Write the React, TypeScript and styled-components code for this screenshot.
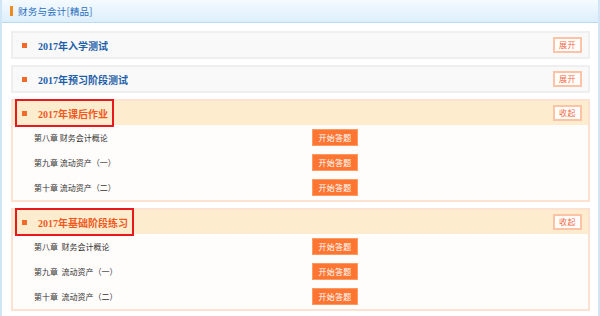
import React from "react";
import styled, { createGlobalStyle } from "styled-components";

const GlobalStyle = createGlobalStyle`
  html, body {
    margin: 0;
    padding: 0;
    background: #fff;
  }
  * {
    box-sizing: border-box;
  }
`;

const Frame = styled.div`
  width: 600px;
  height: 316px;
  border-left: 2px solid #cfe6f7;
  border-right: 2px solid #cfe6f7;
  overflow: hidden;
  font-family: "Liberation Serif", "Noto Sans CJK SC", serif;
`;

const TopBar = styled.div`
  height: 23px;
  display: flex;
  align-items: center;
  padding-left: 8px;
  gap: 5px;
  background: linear-gradient(180deg, #f4faff 0%, #ddeffc 100%);
  border-bottom: 1px solid #b9dcf4;
`;

const Marker = styled.span`
  width: 3px;
  height: 10px;
  background: #f08a1c;
`;

const Heading = styled.span`
  font-family: "Noto Sans CJK SC", sans-serif;
  font-size: 9.5px;
  color: #2a6fbf;
  letter-spacing: 0.2px;
`;

const List = styled.div`
  display: flex;
  flex-direction: column;
  gap: 6px;
  padding: 8px 8px 0 9px;
`;

const Card = styled.div<{ $open?: boolean }>`
  border: 2px solid ${(p) => (p.$open ? "#fde2d2" : "#efefef")};
  background: ${(p) => (p.$open ? "#fffdfc" : "#f9f9f9")};
`;

const CardHead = styled.div<{ $open?: boolean }>`
  height: 24px;
  display: flex;
  align-items: center;
  justify-content: space-between;
  padding-right: 6px;
  background: ${(p) => (p.$open ? "#feecce" : "transparent")};
`;

const TitleBox = styled.div<{ $mark?: boolean }>`
  display: flex;
  align-items: center;
  gap: 11px;
  height: ${(p) => (p.$mark ? "28px" : "24px")};
  margin-left: ${(p) => (p.$mark ? "2px" : "0")};
  padding-left: ${(p) => (p.$mark ? "5px" : "9px")};
  padding-right: 4px;
  border: ${(p) => (p.$mark ? "2px solid #e8191c" : "none")};
`;

const Bullet = styled.span`
  width: 5px;
  height: 5px;
  background: #f26a2a;
`;

const Title = styled.span<{ $open?: boolean }>`
  font-family: "Liberation Serif", "Noto Sans CJK SC", serif;
  font-weight: bold;
  font-size: 10px;
  color: ${(p) => (p.$open ? "#f05a1e" : "#1f5faa")};
`;

const Toggle = styled.button`
  width: 29px;
  height: 16px;
  padding: 0;
  border: 2px solid #fcc3a6;
  background: #fffdfb;
  color: #f26a44;
  font-family: "Noto Sans CJK SC", sans-serif;
  font-size: 8px;
  line-height: 12px;
  letter-spacing: 0.5px;
`;

const Row = styled.div`
  height: 25px;
  display: flex;
  align-items: center;
  padding-left: 21px;
`;

const Label = styled.span`
  width: 278px;
  font-family: "Noto Sans CJK SC", sans-serif;
  font-size: 8px;
  color: #333;
  white-space: pre;
`;

const StartButton = styled.button`
  width: 46px;
  height: 17px;
  padding: 0;
  border: 1px solid #ff9a63;
  background: #ff7632;
  color: #fff;
  font-family: "Noto Sans CJK SC", sans-serif;
  font-size: 8px;
  line-height: 15px;
  letter-spacing: 0.3px;
`;

type Section = {
  title: string;
  open?: boolean;
  mark?: boolean;
  rows?: string[];
};

const sections: Section[] = [
  { title: "2017年入学测试" },
  { title: "2017年预习阶段测试" },
  {
    title: "2017年课后作业",
    open: true,
    mark: true,
    rows: ["第八章 财务会计概论", "第九章 流动资产（一）", "第十章 流动资产（二）"],
  },
  {
    title: "2017年基础阶段练习",
    open: true,
    mark: true,
    rows: ["第八章  财务会计概论", "第九章  流动资产（一）", "第十章  流动资产（二）"],
  },
];

export default function App() {
  return (
    <>
      <GlobalStyle />
      <Frame>
        <TopBar>
          <Marker />
          <Heading>财务与会计[精品]</Heading>
        </TopBar>
        <List>
          {sections.map((s) => (
            <Card key={s.title} $open={s.open}>
              <CardHead $open={s.open}>
                <TitleBox $mark={s.mark}>
                  <Bullet />
                  <Title $open={s.open}>{s.title}</Title>
                </TitleBox>
                <Toggle>{s.open ? "收起" : "展开"}</Toggle>
              </CardHead>
              {s.rows?.map((r) => (
                <Row key={r}>
                  <Label>{r}</Label>
                  <StartButton>开始答题</StartButton>
                </Row>
              ))}
            </Card>
          ))}
        </List>
      </Frame>
    </>
  );
}
